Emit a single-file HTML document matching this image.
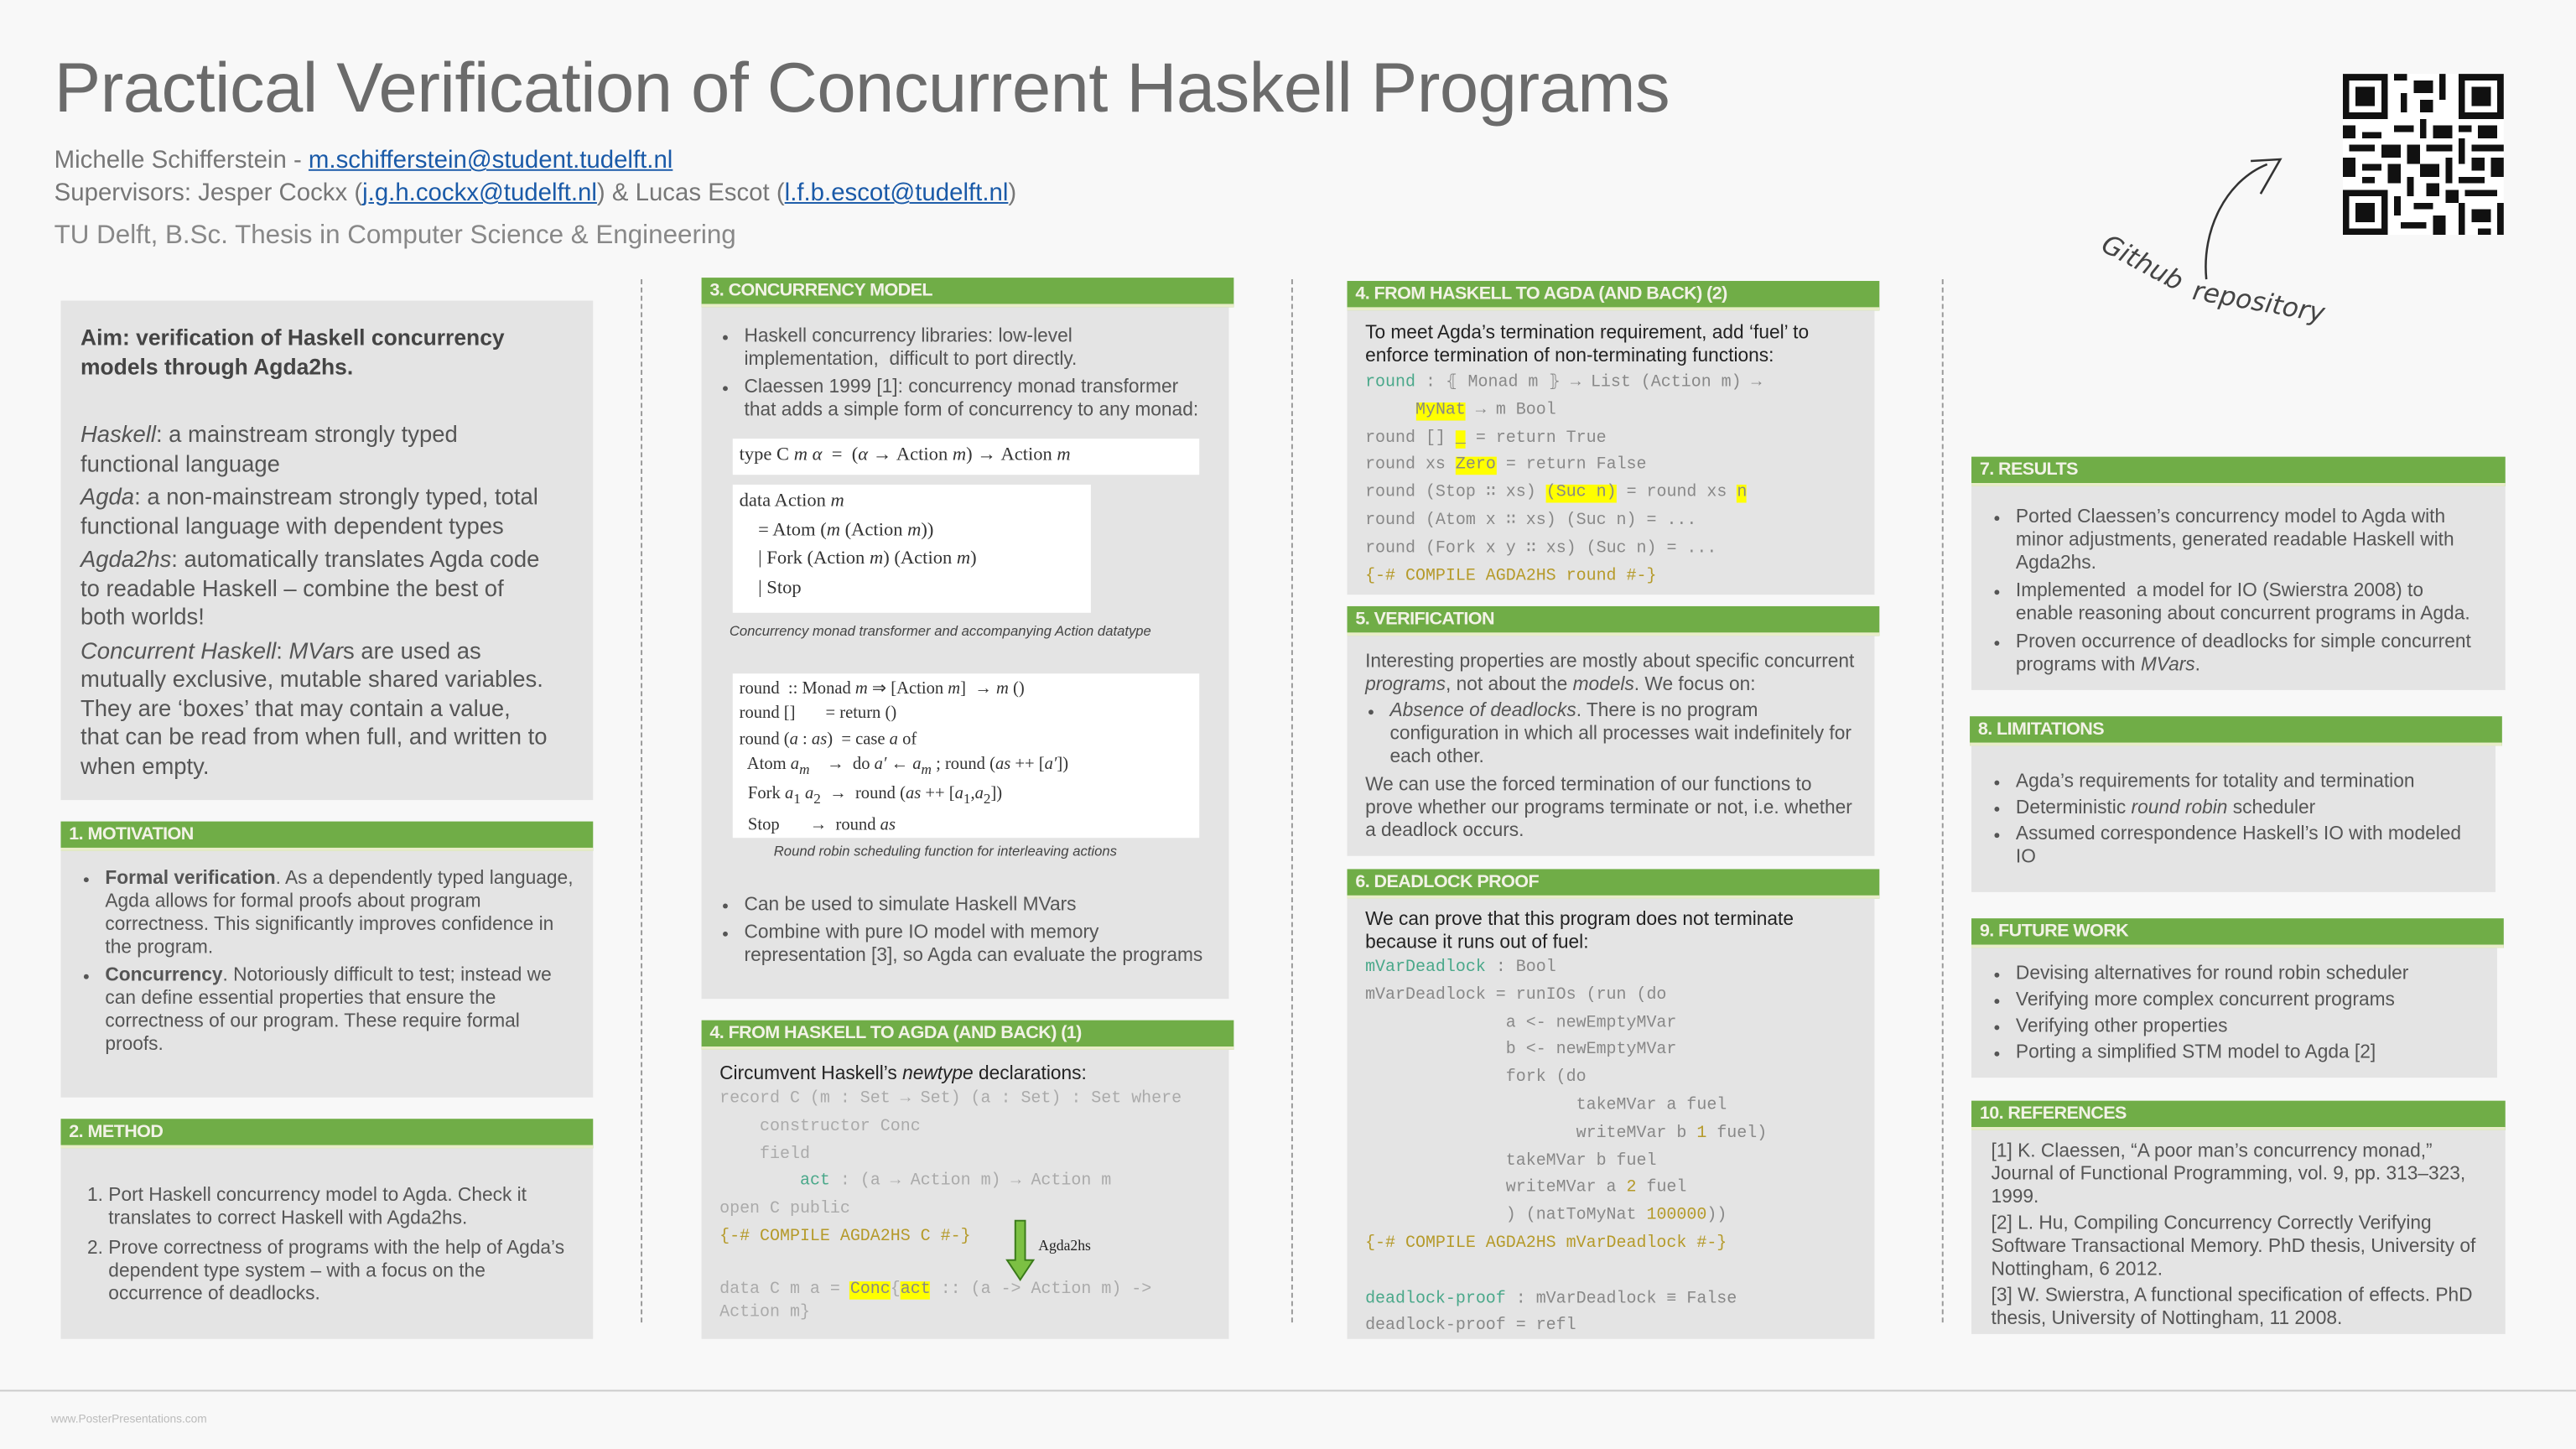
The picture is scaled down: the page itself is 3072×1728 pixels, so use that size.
<!DOCTYPE html>
<html><head><meta charset="utf-8"><style>
html,body{margin:0;padding:0;background:#f8f8f8;}
body{width:3072px;height:1728px;overflow:hidden;}
#p{position:absolute;left:0;top:0;width:1568px;height:882px;transform:scale(1.959184);transform-origin:0 0;font-family:"Liberation Sans",sans-serif;color:#555;}
.a{position:absolute;}
.box{position:absolute;background:#e4e4e4;}
.hd{position:absolute;background:#70ad47;color:#f2f2e6;font-weight:bold;font-size:11px;line-height:16px;padding-left:5px;box-sizing:border-box;letter-spacing:-0.3px;border-bottom:2px solid #e8edc8;}
.t{position:absolute;font-size:11.6px;line-height:14px;color:#555;}
.t ul{margin:0;padding-left:15px;}
.t li{margin:0 0 3px 0;}
.code{position:absolute;font-family:"Liberation Mono",monospace;font-size:10.2px;line-height:16.8px;color:#888;white-space:pre;}
.g{color:#4aa88a}.y{background:#ffff00;color:#888}.o{color:#b59a2a}
.w{position:absolute;background:#fff;font-family:"Liberation Serif",serif;font-size:11.5px;line-height:17.3px;color:#333;white-space:pre;padding:0 4px;}
.cap{position:absolute;font-size:8.5px;font-style:italic;color:#444;}
.dash{position:absolute;width:0;border-left:1.2px dashed #999;}
a{color:#1a5aa8;}
</style></head><body><div id="p">
<div class="a" style="left:33px;top:31px;font-size:42.5px;color:#6b6b6b;letter-spacing:-0.3px;">Practical Verification of Concurrent Haskell Programs</div>
<div class="a" style="left:33px;top:89px;font-size:15px;color:#777;">Michelle Schifferstein - <a href="#">m.schifferstein@student.tudelft.nl</a></div>
<div class="a" style="left:33px;top:109px;font-size:15px;color:#777;">Supervisors: Jesper Cockx (<a href="#">j.g.h.cockx@tudelft.nl</a>) &amp; Lucas Escot (<a href="#">l.f.b.escot@tudelft.nl</a>)</div>
<div class="a" style="left:33px;top:135px;font-size:16px;color:#888;">TU Delft, B.Sc. Thesis in Computer Science &amp; Engineering</div>

<svg class="a" style="left:1426px;top:45px" width="98" height="98" viewBox="0 0 25 25" shape-rendering="crispEdges">
<rect width="25" height="25" fill="#fff"/>
<g fill="#111">
<path d="M0 0h7v7h-7zM1 1v5h5v-5zM2 2h3v3h-3z" fill-rule="evenodd"/>
<path d="M18 0h7v7h-7zM19 1v5h5v-5zM20 2h3v3h-3z" fill-rule="evenodd"/>
<path d="M0 18h7v7h-7zM1 19v5h5v-5zM2 20h3v3h-3z" fill-rule="evenodd"/>
<path d="M8 0h2v1h-2zM11 1h3v2h-3zM9 3h1v3h-1zM15 0h1v4h-1zM12 4h2v2h-2zM8 8h3v1h-3zM12 7h1v3h-1zM14 8h3v2h-3zM18 8h2v1h-2zM21 8h3v2h-3zM0 8h2v2h-2zM3 9h3v1h-3zM1 11h4v1h-4zM6 11h3v2h-3zM10 11h2v3h-2zM13 11h4v1h-4zM18 10h1v4h-1zM20 11h5v1h-5zM0 13h2v3h-2zM3 14h3v1h-3zM7 14h2v3h-2zM12 14h3v2h-3zM16 13h1v4h-1zM20 13h2v2h-2zM23 13h2v3h-2zM3 16h2v1h-2zM10 16h1v3h-1zM13 17h2v2h-2zM18 16h4v1h-4zM8 19h1v3h-1zM11 20h3v1h-3zM16 18h2v2h-2zM19 18h5v1h-5zM18 20h1v5h-1zM20 21h3v2h-3zM24 20h1v5h-1zM9 23h4v1h-4zM14 22h2v3h-2zM21 24h2v1h-2z"/>
</g></svg>
<svg class="a" style="left:1270px;top:90px" width="180" height="130" viewBox="0 0 180 130">
<path d="M73 80 C70 50 85 20 110 10" fill="none" stroke="#333" stroke-width="1.3"/>
<path d="M100 8 L118 7 L106 28" fill="none" stroke="#333" stroke-width="1.3"/>
<text x="8" y="62" transform="rotate(28 8 62)" font-family="DejaVu Sans,sans-serif" font-style="italic" font-size="16" fill="#444">Github</text>
<text x="64" y="92" transform="rotate(10 64 92)" font-family="DejaVu Sans,sans-serif" font-style="italic" font-size="16" fill="#444">repository</text>
</svg>

<div class="dash" style="left:390px;top:170px;height:635px"></div>
<div class="dash" style="left:786px;top:170px;height:635px"></div>
<div class="dash" style="left:1182px;top:170px;height:635px"></div>

<!-- Column 1 -->
<div class="box" style="left:37px;top:183px;width:324px;height:304px"></div>
<div class="t" style="left:49px;top:197px;width:300px;font-size:13.5px;line-height:18px;font-weight:bold;color:#444;">Aim: verification of Haskell concurrency models through Agda2hs.</div>
<div class="t" style="left:49px;top:256px;width:288px;font-size:14px;line-height:17.5px;">
<div style="margin-bottom:3px"><i>Haskell</i>: a mainstream strongly typed functional language</div>
<div style="margin-bottom:3px"><i>Agda</i>: a non-mainstream strongly typed, total functional language with dependent types</div>
<div style="margin-bottom:3px"><i>Agda2hs</i>: automatically translates Agda code to readable Haskell – combine the best of both worlds!</div>
<div><i>Concurrent Haskell</i>: <i>MVar</i>s are used as mutually exclusive, mutable shared variables. They are ‘boxes’ that may contain a value, that can be read from when full, and written to when empty.</div>
</div>

<div class="hd" style="left:37px;top:500px;width:324px;height:18px">1. MOTIVATION</div>
<div class="box" style="left:37px;top:518px;width:324px;height:150px"></div>
<div class="t" style="left:49px;top:528px;width:302px;"><ul>
<li><b>Formal verification</b>. As a dependently typed language, Agda allows for formal proofs about program correctness. This significantly improves confidence in the program.</li>
<li><b>Concurrency</b>. Notoriously difficult to test; instead we can define essential properties that ensure the correctness of our program. These require formal proofs.</li></ul></div>

<div class="hd" style="left:37px;top:681px;width:324px;height:18px">2. METHOD</div>
<div class="box" style="left:37px;top:699px;width:324px;height:116px"></div>
<div class="t" style="left:49px;top:721px;width:302px;"><ol style="margin:0;padding-left:17px">
<li style="margin-bottom:4px">Port Haskell concurrency model to Agda. Check it translates to correct Haskell with Agda2hs.</li>
<li>Prove correctness of programs with the help of Agda’s dependent type system – with a focus on the occurrence of deadlocks.</li></ol></div>

<!-- Column 2 -->
<div class="hd" style="left:427px;top:169px;width:324px;height:18px">3. CONCURRENCY MODEL</div>
<div class="box" style="left:427px;top:187px;width:321px;height:421px"></div>
<div class="t" style="left:438px;top:198px;width:300px;"><ul>
<li>Haskell concurrency libraries: low-level implementation,&nbsp; difficult to port directly.</li>
<li>Claessen 1999 [1]: concurrency monad transformer that adds a simple form of concurrency to any monad:</li></ul></div>
<div class="w" style="left:446px;top:267px;width:276px;height:22px;line-height:20px;">type C <i>m α</i>  =  (<i>α</i> → Action <i>m</i>) → Action <i>m</i></div>
<div class="w" style="left:446px;top:295px;width:210px;height:76px;line-height:17.5px;padding-top:2px">data Action <i>m</i>
    = Atom (<i>m</i> (Action <i>m</i>))
    | Fork (Action <i>m</i>) (Action <i>m</i>)
    | Stop</div>
<div class="cap" style="left:444px;top:379px">Concurrency monad transformer and accompanying Action datatype</div>
<div class="w" style="left:446px;top:410px;width:276px;height:98px;font-size:10.5px;line-height:15.3px;padding-top:2px">round  :: Monad <i>m</i> ⇒ [Action <i>m</i>]  → <i>m</i> ()
round []       = return ()
round (<i>a</i> : <i>as</i>)  = case <i>a</i> of
  Atom <i>a<sub>m</sub></i>    →  do <i>a′</i> ← <i>a<sub>m</sub></i> ; round (<i>as</i> ++ [<i>a′</i>])
  Fork <i>a</i><sub>1</sub> <i>a</i><sub>2</sub>  →  round (<i>as</i> ++ [<i>a</i><sub>1</sub>,<i>a</i><sub>2</sub>])
  Stop       →  round <i>as</i></div>
<div class="cap" style="left:471px;top:513px">Round robin scheduling function for interleaving actions</div>
<div class="t" style="left:438px;top:544px;width:300px;"><ul>
<li>Can be used to simulate Haskell MVars</li>
<li>Combine with pure IO model with memory representation [3], so Agda can evaluate the programs</li></ul></div>

<div class="hd" style="left:427px;top:621px;width:324px;height:18px">4. FROM HASKELL TO AGDA (AND BACK) (1)</div>
<div class="box" style="left:427px;top:639px;width:321px;height:176px"></div>
<div class="t" style="left:438px;top:647px;color:#222">Circumvent Haskell’s <i>newtype</i> declarations:</div>
<div class="code" style="left:438px;top:662px;color:#aaa">record C (m : Set → Set) (a : Set) : Set where
    constructor Conc
    field
        <span class="g">act</span> : (a → Action m) → Action m
open C public
<span class="o">{-# COMPILE AGDA2HS C #-}</span></div>
<svg class="a" style="left:612px;top:742px" width="18" height="38" viewBox="0 0 18 38"><path d="M6 1h6v24h5l-8 12l-8-12h5z" fill="#7cc043" stroke="#3a7a1a" stroke-width="1"/></svg>
<div class="a" style="left:632px;top:753px;font-family:'Liberation Serif',serif;font-size:9px;color:#222">Agda2hs</div>
<div class="code" style="left:438px;top:779px;line-height:14px;color:#aaa">data C m a = <span class="y">Conc</span>{<span class="y">act</span> :: (a -> Action m) ->
Action m}</div>

<!-- Column 3 -->
<div class="hd" style="left:820px;top:171px;width:324px;height:18px">4. FROM HASKELL TO AGDA (AND BACK) (2)</div>
<div class="box" style="left:820px;top:189px;width:321px;height:173px"></div>
<div class="t" style="left:831px;top:196px;width:290px;color:#222">To meet Agda’s termination requirement, add ‘fuel’ to enforce termination of non-terminating functions:</div>
<div class="code" style="left:831px;top:226px"><span class="g">round</span> : ⦃ Monad m ⦄ → List (Action m) →
     <span class="y">MyNat</span> → m Bool
round [] <span class="y">_</span> = return True
round xs <span class="y">Zero</span> = return False
round (Stop ∷ xs) <span class="y">(Suc n)</span> = round xs <span class="y">n</span>
round (Atom x ∷ xs) (Suc n) = ...
round (Fork x y ∷ xs) (Suc n) = ...
<span class="o">{-# COMPILE AGDA2HS round #-}</span></div>

<div class="hd" style="left:820px;top:369px;width:324px;height:18px">5. VERIFICATION</div>
<div class="box" style="left:820px;top:387px;width:321px;height:134px"></div>
<div class="t" style="left:831px;top:396px;width:302px;">Interesting properties are mostly about specific concurrent <i>programs</i>, not about the <i>models</i>. We focus on:
<ul style="margin-top:2px"><li><i>Absence of deadlocks</i>. There is no program configuration in which all processes wait indefinitely for each other.</li></ul>
We can use the forced termination of our functions to prove whether our programs terminate or not, i.e. whether a deadlock occurs.</div>

<div class="hd" style="left:820px;top:529px;width:324px;height:18px">6. DEADLOCK PROOF</div>
<div class="box" style="left:820px;top:547px;width:321px;height:268px"></div>
<div class="t" style="left:831px;top:553px;width:290px;color:#222">We can prove that this program does not terminate because it runs out of fuel:</div>
<div class="code" style="left:831px;top:582px"><span class="g">mVarDeadlock</span> : Bool
mVarDeadlock = runIOs (run (do
              a &lt;- newEmptyMVar
              b &lt;- newEmptyMVar
              fork (do
                     takeMVar a fuel
                     writeMVar b <span class="o">1</span> fuel)
              takeMVar b fuel
              writeMVar a <span class="o">2</span> fuel
              ) (natToMyNat <span class="o">100000</span>))
<span class="o">{-# COMPILE AGDA2HS mVarDeadlock #-}</span>

<span class="g">deadlock-proof</span> : mVarDeadlock ≡ False
deadlock-proof = refl</div>

<!-- Column 4 -->
<div class="hd" style="left:1200px;top:278px;width:325px;height:18px">7. RESULTS</div>
<div class="box" style="left:1200px;top:296px;width:325px;height:124px"></div>
<div class="t" style="left:1212px;top:308px;width:300px;"><ul>
<li>Ported Claessen’s concurrency model to Agda with minor adjustments, generated readable Haskell with Agda2hs.</li>
<li>Implemented&nbsp; a model for IO (Swierstra 2008) to enable reasoning about concurrent programs in Agda.</li>
<li>Proven occurrence of deadlocks for simple concurrent programs with <i>MVars</i>.</li></ul></div>

<div class="hd" style="left:1199px;top:436px;width:324px;height:18px">8. LIMITATIONS</div>
<div class="box" style="left:1200px;top:454px;width:319px;height:89px"></div>
<div class="t" style="left:1212px;top:469px;width:300px;"><ul>
<li style="margin-bottom:2px">Agda’s requirements for totality and termination</li>
<li style="margin-bottom:2px">Deterministic <i>round robin</i> scheduler</li>
<li>Assumed correspondence Haskell’s IO with modeled IO</li></ul></div>

<div class="hd" style="left:1200px;top:559px;width:324px;height:18px">9. FUTURE WORK</div>
<div class="box" style="left:1200px;top:577px;width:320px;height:79px"></div>
<div class="t" style="left:1212px;top:586px;width:300px;"><ul>
<li style="margin-bottom:2px">Devising alternatives for round robin scheduler</li>
<li style="margin-bottom:2px">Verifying more complex concurrent programs</li>
<li style="margin-bottom:2px">Verifying other properties</li>
<li>Porting a simplified STM model to Agda [2]</li></ul></div>

<div class="hd" style="left:1200px;top:670px;width:325px;height:18px">10. REFERENCES</div>
<div class="box" style="left:1200px;top:688px;width:325px;height:124px"></div>
<div class="t" style="left:1212px;top:694px;width:300px;">
<div style="margin-bottom:2px">[1] K. Claessen, “A poor man’s concurrency monad,” Journal of Functional Programming, vol. 9, pp. 313–323, 1999.</div>
<div style="margin-bottom:2px">[2] L. Hu, Compiling Concurrency Correctly Verifying Software Transactional Memory. PhD thesis, University of Nottingham, 6 2012.</div>
<div>[3] W. Swierstra, A functional specification of effects. PhD thesis, University of Nottingham, 11 2008.</div></div>

<div class="a" style="left:0;top:846px;width:1568px;height:1px;background:#ccc"></div>
<div class="a" style="left:31px;top:861px;font-size:7px;color:#bbb">www.PosterPresentations.com</div>
</div></body></html>
